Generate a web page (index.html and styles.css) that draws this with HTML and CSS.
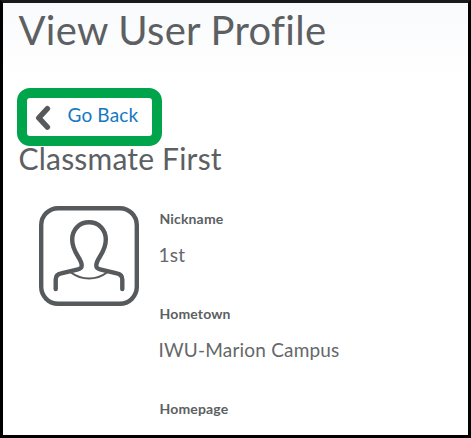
FILE: index.html
```html
<!DOCTYPE html>
<html lang="en">
<head>
<meta charset="utf-8">
<title>View User Profile</title>
<link rel="stylesheet" href="styles.css">
</head>
<body>
<main class="page">
  <h1 class="title">View User Profile</h1>
  <a class="back" href="#">
    <svg class="chevron" width="16" height="26" viewBox="0 0 16 26" fill="none" stroke="#565a5c" stroke-width="5.400" stroke-linecap="round" stroke-linejoin="round"><path d="M12.400 3.700 3.800 12.900l8.600 9.200"/></svg>
    <span class="back-label">Go Back</span>
  </a>
  <h2 class="name">Classmate First</h2>
  <section class="profile">
    <svg class="avatar" width="100" height="100" viewBox="0 0 100 100" fill="none" stroke="#565a5c" stroke-linecap="round" stroke-linejoin="round">
      <rect x="2.200" y="2.200" width="95.600" height="95.600" rx="17" stroke-width="4.400"/>
      <path stroke-width="2" d="M32 66.500Q40 72.500 50 72.500T68 66.500"/>
      <path stroke-width="4.400" d="M16.700 83V73.500c0-3.500 2-5.500 5.500-6.200L39 63.300c2.800-.6 3.700-1.500 3.700-4 0-7-9.500-12.500-9.500-25.500 0-10.500 7.300-17.500 16.800-17.500s16.800 7 16.800 17.500c0 13-9.500 18.500-9.500 25.500 0 2.500.9 3.400 3.700 4l16.800 4c3.500.7 5.500 2.700 5.500 6.200V83"/>
    </svg>
    <dl class="fields">
      <dt>Nickname</dt><dd>1st</dd>
      <dt>Hometown</dt><dd>IWU-Marion Campus</dd>
      <dt>Homepage</dt>
    </dl>
  </section>
</main>
</body>
</html>
```
FILE: styles.css
```css
* { box-sizing: border-box; }
body { margin: 0; font-family: Lato, sans-serif; color: #5c6062; }
.page {
  height: 438px;
  padding: 3px 15px 0;
  border: 3px solid #000;
  border-top-color: #1a1a1a;
  background: linear-gradient(#f9fafc, #fff 75px);
  overflow: hidden;
}
.title { margin: 0 0 0 .5px; font-size: 40px; line-height: 48px; font-weight: 400; letter-spacing: .28px; white-space: nowrap; }
.back {
  display: flex;
  align-items: center;
  width: 145px;
  height: 58px;
  margin: 34px 0 0 -1px;
  padding-left: 8px;
  border: 10px solid #00a44a;
  border-radius: 13px;
  background: #fff;
  color: #1478c4;
  font-size: 19px;
  line-height: 24px;
  text-decoration: none;
}
.chevron { margin-top: 2px; }
.back-label { margin: -4px 0 0 16.5px; letter-spacing: .15px; white-space: nowrap; }
.name { margin: -6px 0 0 .5px; font-size: 30px; line-height: 36px; font-weight: 400; letter-spacing: .2px; }
.profile { display: flex; margin: 30px 0 0 21px; }
.avatar { flex: none; }
.fields { margin: 4px 0 0 20.5px; }
.fields dt { height: 33px; font-size: 14px; line-height: 18px; font-weight: 700; letter-spacing: .15px; }
.fields dd { height: 62px; margin: 0 0 0 -1px; color: #64686a; font-size: 19px; line-height: 24px; letter-spacing: .19px; }
```
